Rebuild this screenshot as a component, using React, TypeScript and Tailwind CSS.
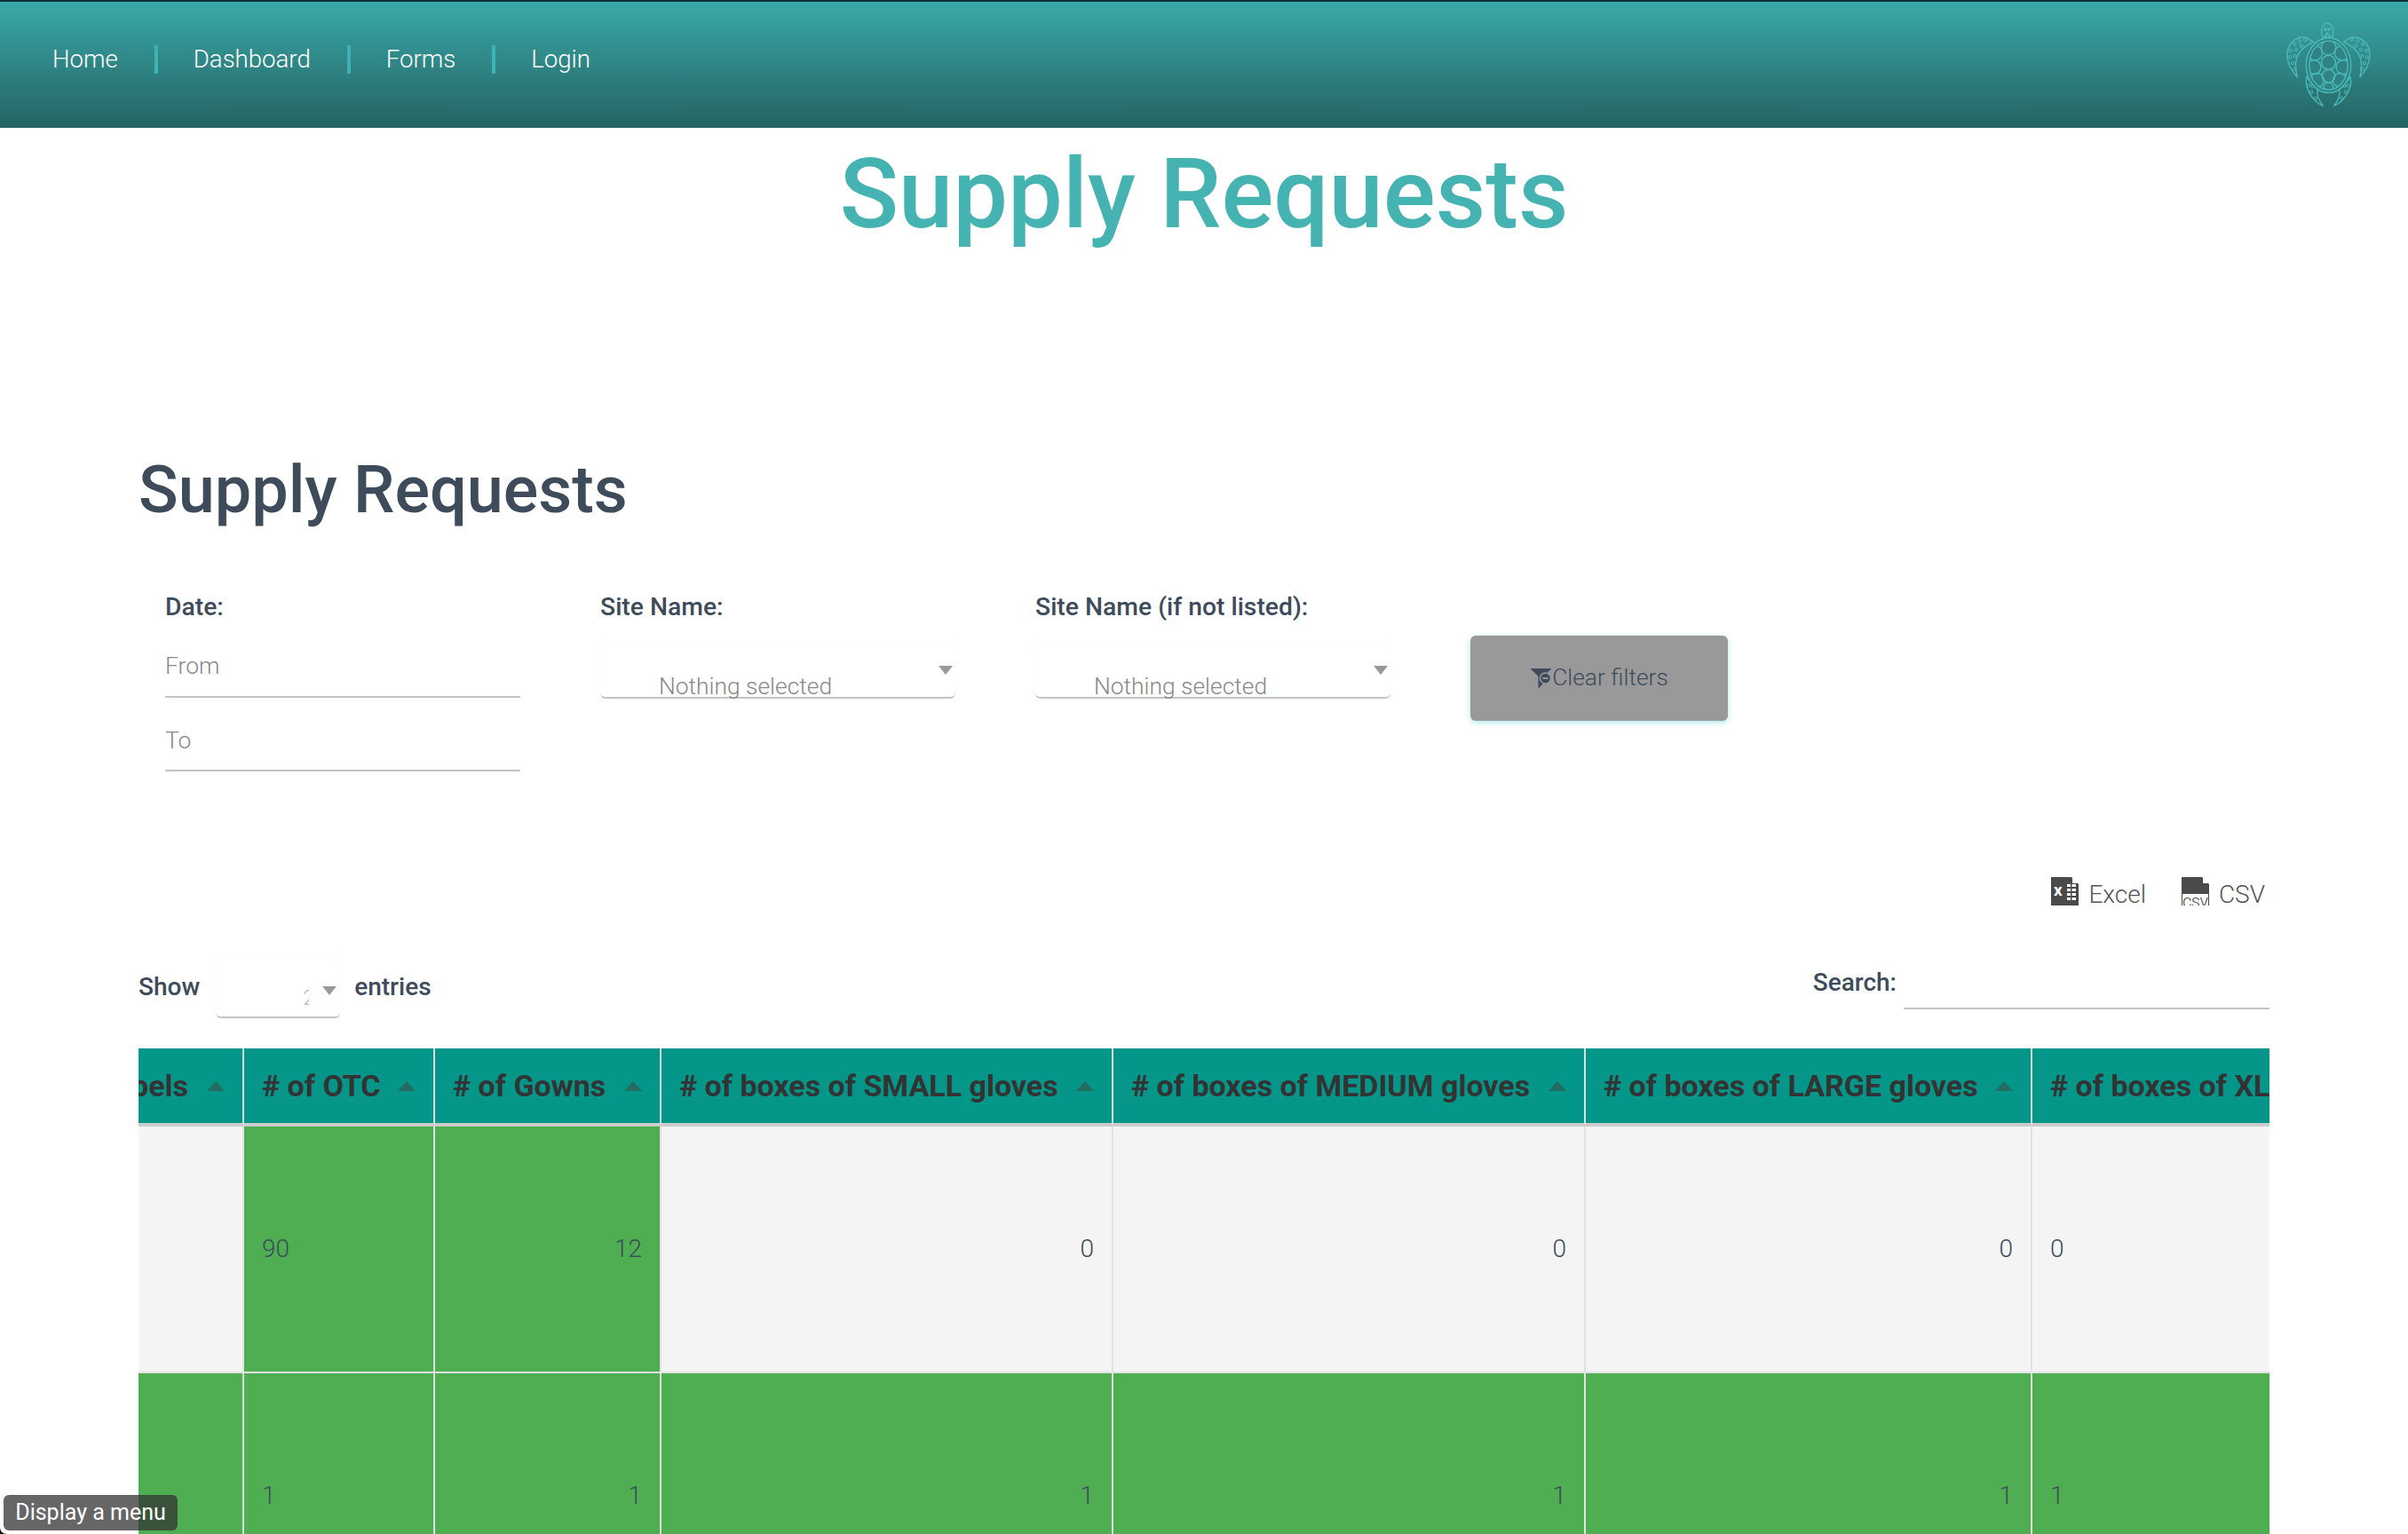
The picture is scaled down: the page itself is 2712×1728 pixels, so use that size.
const navLinks = ["Home", "Dashboard", "Forms", "Login"]

const columns = [
  { label: "# of ear labels", width: "w-[300px]" },
  { label: "# of OTC", width: "w-[215px]" },
  { label: "# of Gowns", width: "w-[255px]" },
  { label: "# of boxes of SMALL gloves", width: "w-[509px]" },
  { label: "# of boxes of MEDIUM gloves", width: "w-[532px]" },
  { label: "# of boxes of LARGE gloves", width: "w-[503px]" },
  { label: "# of boxes of XL gloves", width: "w-[460px]" },
]

const rows = [
  [
    { value: "", green: false, right: false },
    { value: "90", green: true, right: false },
    { value: "12", green: true, right: true },
    { value: "0", green: false, right: true },
    { value: "0", green: false, right: true },
    { value: "0", green: false, right: true },
    { value: "0", green: false, right: false },
  ],
  [
    { value: "", green: true, right: false },
    { value: "1", green: true, right: false },
    { value: "1", green: true, right: true },
    { value: "1", green: true, right: true },
    { value: "1", green: true, right: true },
    { value: "1", green: true, right: true },
    { value: "1", green: true, right: false },
  ],
]

function Turtle() {
  const front = "M232 128C195 120 165 150 166 190C167 222 185 246 200 262C192 232 190 205 205 182C215 166 232 152 254 143Z"
  const rear = "M232 262C224 292 245 340 288 360C270 336 262 316 272 297C256 290 242 277 232 262Z"
  const dots = [
    [190, 150], [208, 140], [226, 136], [178, 172], [196, 168], [214, 156], [176, 194], [192, 190], [184, 214], [192, 234],
    [240, 290], [248, 312], [262, 334], [252, 292],
  ]
  const plates = [
    [306, 162, 25], [306, 212, 24], [306, 258, 22], [306, 296, 16],
    [260, 180, 25], [352, 180, 25], [256, 228, 24], [356, 228, 24], [268, 272, 23], [344, 272, 23],
  ]
  return (
    <svg viewBox="160 70 295 300" className="w-[98px] h-[100px]" fill="none" stroke="#4dbdba" strokeWidth="4">
      <defs>
        <clipPath id="shell">
          <ellipse cx="306" cy="222" rx="65" ry="83" />
        </clipPath>
      </defs>
      <ellipse cx="302" cy="108" rx="20" ry="30" />
      <circle cx="296" cy="100" r="3" />
      <circle cx="308" cy="100" r="3" />
      <circle cx="302" cy="114" r="3" />
      <circle cx="296" cy="124" r="3" />
      <circle cx="309" cy="124" r="3" />
      <path d={front} />
      <path d={front} transform="matrix(-1 0 0 1 612 0)" />
      <path d={rear} />
      <path d={rear} transform="matrix(-1 0 0 1 612 0)" />
      {dots.map(([x, y]) => (
        <g key={`${x}-${y}`}>
          <circle cx={x} cy={y} r="5" strokeWidth="3" />
          <circle cx={612 - x} cy={y} r="5" strokeWidth="3" />
        </g>
      ))}
      <ellipse cx="306" cy="222" rx="76" ry="93" fill="#2f8385" />
      <ellipse cx="306" cy="222" rx="65" ry="83" />
      <g clipPath="url(#shell)">
        {plates.map(([x, y, r]) => (
          <circle key={`${x}-${y}`} cx={x} cy={y} r={r} />
        ))}
      </g>
    </svg>
  )
}

function Caret() {
  return <span className="w-0 h-0 border-x-[8px] border-x-transparent border-t-[10px] border-t-[#999]" />
}

function SelectBox({ label }: { label: string }) {
  return (
    <div className="relative w-[400px] h-[61px] mt-[26px] rounded-md border-b-2 border-[#c4c4c4] shadow-[0_0_1px_rgba(0,0,0,0.12)]">
      <span className="absolute left-[66px] bottom-[-4px] text-[26.4px] leading-[32px] font-light text-[#888]">{label}</span>
      <span className="absolute right-[3px] top-[24px] flex"><Caret /></span>
    </div>
  )
}

function FilterIcon() {
  return (
    <svg viewBox="0 0 24 23" className="w-[25px] h-[23px]" fill="#3e4b5b">
      <path d="M0 0H24L15 9V16L9 23V9Z" />
      <circle cx="17" cy="11" r="6" stroke="#999" strokeWidth="1.5" />
      <rect x="14" y="10" width="6" height="2" fill="#999" />
    </svg>
  )
}

function ExcelIcon() {
  return (
    <svg viewBox="0 0 31 32" className="w-[31px] h-[32px] mb-[8px]">
      <path d="M0 0H23L31 8V32H0Z" fill="#4a4a4a" />
      <path d="M24 0L31 7H24Z" fill="#fff" />
      <text x="3" y="21" fontSize="19" fontWeight="700" fontFamily="Roboto, sans-serif" fill="#fff">x</text>
      <path d="M18 8H28V11H18ZM18 13H28V16H18ZM18 18H28V21H18ZM18 23H28V26H18Z" fill="#fff" />
      <path d="M22 8H23.5V26H22Z" fill="#4a4a4a" />
    </svg>
  )
}

function CsvIcon() {
  return (
    <svg viewBox="0 0 31 32" className="w-[31px] h-[32px] mb-[8px]">
      <path d="M0 0H23L31 8V32H0Z" fill="#4a4a4a" />
      <path d="M24 0L31 7H24Z" fill="#fff" />
      <rect x="1" y="19" width="29" height="13" fill="#fff" />
      <text x="1" y="34" fontSize="20" textLength="29" fontFamily="Roboto, sans-serif" fill="#4a4a4a">csv</text>
    </svg>
  )
}

export default function App() {
  return (
    <div className="relative h-[1728px] overflow-hidden bg-white text-[#3e4b5b] font-['Roboto',sans-serif]">
      <header className="h-[144px] flex items-center justify-between border-t-2 border-[#12303a] bg-gradient-to-b from-[#3aa9a9] to-[#256363] pl-[59px] pr-[40px]">
        <nav className="flex items-center -mt-[12px]">
          {navLinks.map((link, index) => (
            <a
              key={link}
              className={`text-[27.6px] leading-[32px] font-light text-white ${index < 3 ? "pr-[41px] mr-[40px] border-r-[4px] border-[#3fb3b3]" : ""}`}
            >
              {link}
            </a>
          ))}
        </nav>
        <Turtle />
      </header>

      <h1 className="h-[152px] text-center text-[110px] leading-[150px] font-medium text-[#45b3b1]">Supply Requests</h1>

      <main className="px-[156px]">
        <h2 className="mt-[206px] text-[73.8px] leading-[100px] font-medium">Supply Requests</h2>

        <div className="mt-[66px] pl-[30px] flex gap-[90px] items-start">
          <div className="w-[400px]">
            <label className="block text-[28.3px] leading-[32px] font-medium">Date:</label>
            <div className="mt-[34px] h-[52px] border-b-2 border-[#c4c4c4] text-[26.4px] leading-[32px] font-light text-[#888]">From</div>
            <div className="mt-[32px] h-[51px] border-b-2 border-[#c4c4c4] text-[26.4px] leading-[32px] font-light text-[#888]">To</div>
          </div>
          <div>
            <label className="block text-[28.3px] leading-[32px] font-medium">Site Name:</label>
            <SelectBox label="Nothing selected" />
          </div>
          <div>
            <label className="block text-[28.3px] leading-[32px] font-medium">Site Name (if not listed):</label>
            <SelectBox label="Nothing selected" />
          </div>
          <button className="mt-[48px] w-[290px] h-[96px] flex items-center justify-center rounded-md bg-[#999] text-[26.4px] font-light shadow-[0_2px_6px_rgba(70,200,200,0.45)]">
            <FilterIcon />
            <span>Clear filters</span>
          </button>
        </div>

        <div className="mt-[119px] flex justify-end items-center pr-[5px] text-[28px] leading-[32px] font-light text-[#555]">
          <span className="flex items-center gap-[11px]"><ExcelIcon />Excel</span>
          <span className="flex items-center gap-[11px] ml-[40px]"><CsvIcon />CSV</span>
        </div>

        <div className="mt-[49px] h-[70px] flex justify-between">
          <div className="flex items-center text-[28px] font-medium">
            <span>Show</span>
            <div className="relative w-[140px] h-[69px] ml-[18px] mr-[16px] rounded-md border-b-2 border-[#c4c4c4] shadow-[0_0_1px_rgba(0,0,0,0.12)]">
              <span className="absolute left-[98px] top-[36px] w-[7px] h-[20px] overflow-hidden text-[24px] leading-[20px] font-light text-[#bbb]">25</span>
              <span className="absolute right-[4px] top-[33px] flex"><Caret /></span>
            </div>
            <span>entries</span>
          </div>
          <div className="flex items-start">
            <label className="mt-[14px] text-[28px] leading-[32px] font-medium">Search:</label>
            <div className="ml-[8px] w-[412px] h-[60px] border-b-2 border-[#c4c4c4]" />
          </div>
        </div>

        <div className="mt-[34px] overflow-hidden">
          <table className="table-fixed border-separate border-spacing-0 -ml-[181px] w-[2774px]">
            <thead>
              <tr>
                {columns.map((col) => (
                  <th key={col.label} className={`${col.width} h-[88px] px-[20px] bg-[#05968a] border-r-2 border-b-4 border-b-[#ccc] border-r-[#ddd] text-left text-[34px] font-bold text-[#333] whitespace-nowrap overflow-hidden`}>
                    <span className="flex items-center justify-between">
                      {col.label}
                      <span className="w-0 h-0 border-x-[10px] border-x-transparent border-b-[11px] border-b-[#246b60]" />
                    </span>
                  </th>
                ))}
              </tr>
            </thead>
            <tbody>
              {rows.map((row, rowIndex) => (
                <tr key={rowIndex}>
                  {row.map((cell, cellIndex) => (
                    <td
                      key={cellIndex}
                      className={`h-[278px] px-[20px] border-r-2 border-b-2 border-[#e2e2e2] text-[28px] font-light ${cell.green ? "bg-[#4fae52]" : "bg-[#f4f4f4]"} ${cell.right ? "text-right" : "text-left"}`}
                    >
                      {cell.value}
                    </td>
                  ))}
                </tr>
              ))}
            </tbody>
          </table>
        </div>
      </main>

      <div className="absolute left-[4px] bottom-[4px] h-[40px] w-[196px] flex items-center justify-center rounded-md bg-[#333]/75 text-[25px] text-white">Display a menu</div>
      <svg viewBox="0 0 8 8" className="absolute left-0 bottom-0 w-[8px] h-[8px]">
        <path d="M0 0C0 5 3 8 8 8H0Z" fill="#000" />
      </svg>
    </div>
  )
}
